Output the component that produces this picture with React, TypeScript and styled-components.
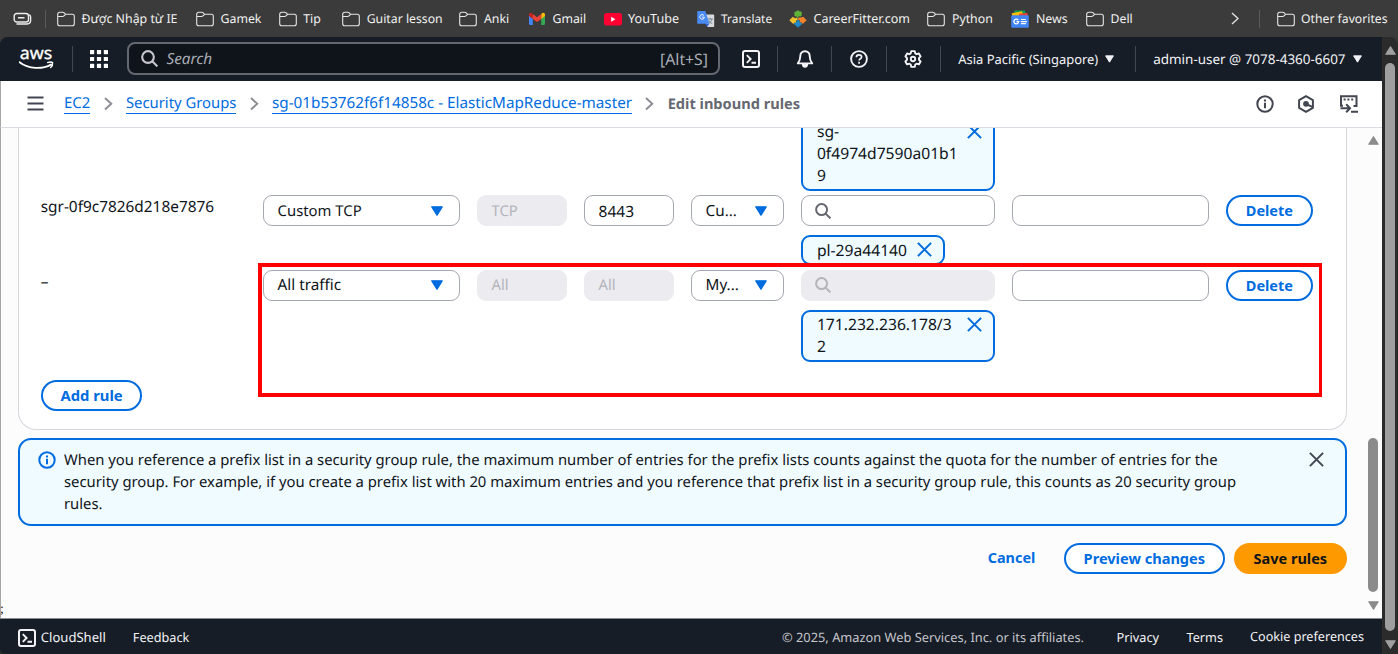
import React from 'react';
import styled, { createGlobalStyle, css } from 'styled-components';

const Global = createGlobalStyle`
  * { box-sizing: border-box; }
  html, body { margin: 0; padding: 0; overflow: hidden; }
  body { font-family: 'Noto Sans', sans-serif; text-rendering: geometricPrecision; color: #0f141a; background: #3b3b3b; }
  svg { display: block; flex: none; }
`;

const blue = '#006ce0';

/* ---------- browser chrome ---------- */
const Browser = styled.div`
  width: 1398px;
  height: 654px;
  display: grid;
  grid-template-rows: 37px 1fr;
  background: #3b3b3b;
`;
const BookmarkBar = styled.nav`
  display: flex;
  align-items: center;
  color: #f2f2f2;
  padding-left: 13px;
`;
const Bookmark = styled.div<{ $w?: number; $size?: number }>`
  display: flex;
  align-items: center;
  gap: 6.5px;
  width: ${p => (p.$w ? `${p.$w}px` : 'auto')};
  flex: none;
  font-size: ${p => p.$size ?? 12.3}px;
  line-height: 18px;
  white-space: nowrap;
`;
const BarLine = styled.span`
  width: 1px;
  height: 18px;
  background: #5a5a5a;
  flex: none;
`;
const BarStart = styled.div`
  display: flex;
  align-items: center;
  justify-content: space-between;
  width: 33px;
  margin-right: 11px;
`;
const BarEnd = styled.div`
  display: flex;
  align-items: center;
  margin-left: auto;
  gap: 17px;
  padding-right: 10.5px;
  svg:first-child { margin-right: 2px; }
  div svg:first-child { margin-right: 0; }
`;
const Window = styled.div`
  display: flex;
  min-height: 0;
  background: #2b2b2b;
  border-radius: 8px 8px 0 0;
  overflow: hidden;
`;
const Console = styled.div`
  position: relative;
  width: 1382px;
  display: flex;
  flex-direction: column;
  min-height: 0;
  border-bottom-left-radius: 6px;
`;
const ScrollTrack = styled.div<{ $w: number }>`
  width: ${p => p.$w}px;
  flex: none;
  display: flex;
  flex-direction: column;
  align-items: center;
`;
const Thumb = styled.div<{ $h: number; $color: string }>`
  width: 9.5px;
  height: ${p => p.$h}px;
  border-radius: 5px;
  background: ${p => p.$color};
`;
const OuterTrack = styled(ScrollTrack)`
  justify-content: space-between;
  padding: 8.5px 0 5px;
`;
const InnerTrack = styled(ScrollTrack)`
  margin-left: auto;
  padding: 8.5px 0 8px;
`;
const TrackSpace = styled.div<{ $h: number }>`
  height: ${p => p.$h}px;
`;

/* ---------- console header ---------- */
const Header = styled.header`
  height: 44px;
  flex: none;
  display: flex;
  align-items: center;
  background: #161d26;
  color: #f3f3f7;
  padding-bottom: 1px;
`;
const Divider = styled.span`
  width: 1px;
  height: 26px;
  background: #424650;
  flex: none;
`;
const LogoCell = styled.div`
  width: 72px;
  padding-left: 19px;
`;
const GridCell = styled.div`
  width: 54px;
  padding-left: 17px;
`;
const SearchBox = styled.div`
  width: 593px;
  height: 33px;
  border: 2px solid #656871;
  border-radius: 8px;
  background: #0f141a;
  display: flex;
  align-items: center;
  padding: 0 10px 0 11.5px;
  margin-right: 4px;
  color: #a9adb6;
`;
const SearchHint = styled.span`
  font-size: 15.3px;
  font-style: italic;
  margin-left: 9px;
  line-height: 20px;
`;
const Shortcut = styled.span`
  margin-left: auto;
  font-size: 15.8px;
  line-height: 20px;
`;
const IconCell = styled.div`
  width: 53.2px;
  display: flex;
  justify-content: center;
`;
const NavMenu = styled.div<{ $size: number; $w?: number }>`
  display: flex;
  align-items: center;
  gap: 7px;
  padding-left: 17.5px;
  width: ${p => (p.$w ? `${p.$w}px` : 'auto')};
  font-size: ${p => p.$size}px;
  white-space: nowrap;
`;

/* ---------- breadcrumbs ---------- */
const CrumbBar = styled.div`
  height: 46.5px;
  flex: none;
  display: flex;
  align-items: center;
  background: #fff;
  border-left: 1px solid #a6a6a6;
  border-bottom: 1px solid #d9dbe0;
  padding: 0 24.5px 0 25.5px;
`;
const Crumbs = styled.div`
  display: flex;
  align-items: center;
  gap: 13.4px;
  margin-left: 20.5px;
`;
const Crumb = styled.a<{ $size: number }>`
  color: ${blue};
  font-size: ${p => p.$size}px;
  line-height: 19px;
  border-bottom: 1px solid ${blue};
  white-space: nowrap;
`;
const CurrentCrumb = styled.span`
  color: #656871;
  font-weight: 700;
  font-size: 14.6px;
  line-height: 20px;
`;
const CrumbTools = styled.div`
  display: flex;
  gap: 23.5px;
  margin-left: auto;
`;

/* ---------- main ---------- */
const Main = styled.main`
  flex: 1;
  min-height: 0;
  display: flex;
  overflow: hidden;
  background: #fcfcfd;
  border-left: 1px solid #a6a6a6;
`;
const Content = styled.div`
  width: 1329px;
  margin-left: 17px;
`;
const Card = styled.section`
  height: 302px;
  background: #fff;
  border: 1px solid #d5d7dc;
  border-top: 0;
  border-radius: 0 0 18px 18px;
  padding-left: 21.7px;
  overflow: hidden;
`;
const RuleRow = styled.div<{ $h: number; $pull?: number }>`
  display: grid;
  grid-template-columns: 205.3px 196.7px 89.7px 89.7px 92.6px 193.5px 197px 86px;
  column-gap: 17.3px;
  align-items: start;
  height: ${p => p.$h}px;
  margin-top: ${p => -(p.$pull ?? 0)}px;
  font-size: 15.4px;
  line-height: 22px;
`;
const RuleId = styled.div`
  white-space: nowrap;
  padding-top: .8px;
`;
const fieldFrame = css`
  height: 31px;
  border: 1px solid #a4a8b1;
  border-radius: 9px;
  display: flex;
  align-items: center;
  padding: 0 14px 0 13.3px;
  background: #fff;
  white-space: nowrap;
`;
const Field = styled.div<{ $disabled?: boolean; $size?: number }>`
  ${fieldFrame}
  font-size: ${p => p.$size ?? 15.3}px;
  ${p => p.$disabled && css`
    background: #ebebf0;
    border-color: #ebebf0;
    color: #b4b4bb;
  `}
`;
const SelectField = styled(Field)`
  justify-content: space-between;
  padding-right: 16px;
`;
const SourceCell = styled.div`
  display: flex;
  flex-direction: column;
  align-items: stretch;
  gap: 9px;
`;
const Token = styled.div<{ $narrow?: boolean }>`
  display: flex;
  justify-content: space-between;
  width: ${p => (p.$narrow ? '143.5px' : 'auto')};
  border: 2px solid ${blue};
  border-radius: 9px;
  background: #f0fbff;
  padding: 1.5px 10.5px 2.7px 13.8px;
  font-size: 15.65px;
  line-height: 22px;
  svg { margin-top: 3.8px; }
`;
const TokenText = styled.span`
  white-space: pre-line;
`;
const PillButton = styled.button<{ $w: number; $kind?: 'primary' | 'link'; $size?: number }>`
  width: ${p => p.$w}px;
  height: 31px;
  padding: 0 0 1px;
  border-radius: 16px;
  border: 2px solid ${p => (p.$kind === 'primary' ? '#ff9900' : p.$kind === 'link' ? 'transparent' : blue)};
  background: ${p => (p.$kind === 'primary' ? '#ff9900' : p.$kind === 'link' ? 'transparent' : '#fff')};
  color: ${p => (p.$kind === 'primary' ? '#0f141a' : blue)};
  font: 700 ${p => p.$size ?? 14.5}px/20px 'Noto Sans', sans-serif;
  white-space: nowrap;
`;
const Notice = styled.aside`
  margin-top: 8.5px;
  height: 88px;
  border: 2px solid ${blue};
  border-radius: 13px;
  background: #f0fbff;
  display: flex;
  padding: 8.7px 21.5px 0 17.5px;
`;
const NoticeIcon = styled.div`
  padding-top: 2.3px;
  margin-right: 8.5px;
`;
const NoticeText = styled.p`
  margin: 0;
  font-size: 14.82px;
  line-height: 22px;
  white-space: pre-line;
`;
const NoticeClose = styled.div`
  margin-left: auto;
  padding-top: 3.3px;
`;
const Actions = styled.div`
  display: flex;
  justify-content: flex-end;
  margin-top: 17px;
  gap: 9px;
`;
const Highlight = styled.div`
  position: absolute;
  left: 258px;
  top: 226px;
  width: 1064px;
  height: 134px;
  border: solid #fe0000;
  border-width: 4px 3px 4px 4px;
`;
const Stray = styled.span`
  position: absolute;
  left: 0;
  top: 564px;
  font: 14px/18px 'Liberation Serif', serif;
`;

/* ---------- footer ---------- */
const Footer = styled.footer`
  height: 36px;
  flex: none;
  display: flex;
  align-items: center;
  background: #161d26;
  color: #f3f3f7;
  padding: 2.500px 18px 0 17.5px;
  border-top: 1px solid #8c8c94;
  border-bottom-left-radius: 6px;
  white-space: nowrap;
  line-height: 18px;
`;
const FooterItem = styled.span<{ $size: number; $gap: number; $muted?: boolean }>`
  font-size: ${p => p.$size}px;
  margin-left: ${p => p.$gap}px;
  padding-bottom: 1px;
  color: ${p => (p.$muted ? '#c6c6cd' : 'inherit')};
`;
const FooterRight = styled.div`
  margin-left: auto;
  display: flex;
`;

/* ---------- drawings ---------- */
const FolderIcon = () => (
  <svg width="18" height="18" viewBox="0 0 18 18" fill="none" stroke="#e6e6e6" strokeWidth="1.1">
    <path d="M.7 4.2a2 2 0 0 1 2-2h3.1c.6 0 1 .2 1.4.6L8.6 4.300h6.700a2 2 0 0 1 2 2v7.400a2 2 0 0 1-2 2H2.700a2 2 0 0 1-2-2zM.7 6.500h4.900c.6 0 1-.2 1.400-.6l1.600-1.600" />
  </svg>
);
const GmailIcon = () => (
  <svg width="18" height="18" viewBox="0 0 18 18">
    <path d="M1 4.500v9.300c0 .7.500 1.200 1.200 1.200h2.600V8.200z" fill="#4285f4" />
    <path d="M17 4.500v9.300c0 .7-.5 1.200-1.200 1.200h-2.600V8.200z" fill="#34a853" />
    <path d="M13.200 4.300v4.600L17 6V4.600c0-1.700-1.800-2.400-3-1.400z" fill="#fbbc04" />
    <path d="M1 4.600V6l3.800 2.900V4.300L4 3.200C2.800 2.200 1 2.900 1 4.600z" fill="#c5221f" />
    <path d="M4.800 4v4.900L9 12l4.200-3.100V4L9 7.200z" fill="#ea4335" />
  </svg>
);
const YouTubeIcon = () => (
  <svg width="18" height="18" viewBox="0 0 18 18">
    <rect x="0" y="3" width="18" height="12.500" rx="2.800" fill="#ff0033" />
    <path d="M7.200 6.800v5l4.200-2.500z" fill="#fff" />
  </svg>
);
const TranslateIcon = () => (
  <svg width="18" height="18" viewBox="0 0 18 18">
    <path d="M7 4.500h9.200c.6 0 1 .4 1 1v10.500c0 .6-.4 1-1 1h-5.700z" fill="#d8dadd" />
    <path d="M10.500 9h5.500M13.200 7.800V9M15 9c-.4 2-1.800 3.600-3.700 4.600M11.700 10.300c.7 1.400 1.800 2.500 3.500 3.300" fill="none" stroke="#6b7f8c" strokeWidth=".9" />
    <path d="M8.200 13.800h4.200l-2.200 3z" fill="#3367d6" />
    <path d="M1.200.9h7.200l4 12.900H1.200c-.6 0-1-.4-1-1V1.900c0-.6.4-1 1-1z" fill="#4a8af4" />
    <path d="M7 5.600A2.300 2.300 0 1 0 7.400 7.200H5.200" fill="none" stroke="#fff" strokeWidth="1" />
  </svg>
);
const PuzzleIcon = () => (
  <svg width="18" height="18" viewBox="0 0 18 18">
    <path d="M9 17.800 4.500 13.500l2.700-1.300L9 9l2 3.200 2.500 1.300z" fill="#1e88c8" />
    <path d="M.3 10.200 3.800 6.700l2.200 1.500 2-.8.9 2.100-2 1.200.3 2-1.700-.3-1.200 1.700z" fill="#f2c12e" />
    <path d="M17.700 10.200 14.200 6.700l-2.400.9-2.100-.1-.8 2 2 .9-.2 2 1.800-.2 1.200 1.700z" fill="#f0822c" />
    <path d="M5.600 4C4.600 2.500 6 1 7.400 1.600 8-.2 10.400.200 10.800 1.700c1.700-.5 2.800 1.200 1.700 2.600.8 1-.2 2.400-1.400 2.200l-1.500-.2L9 9 8 6.400C6.300 7.200 4.800 5.600 5.600 4z" fill="#5fb336" />
  </svg>
);
const NewsIcon = () => (
  <svg width="18" height="18" viewBox="0 0 18 18">
    <path d="M3.500.6h10.400l1 4H3z" fill="#0c9d58" />
    <path d="M.8 3.200 11 1.200l1.500 5H1.200z" fill="#fbbc04" />
    <path d="M8 3.800l8.500-.8.300 4H8z" fill="#ea4335" />
    <rect x=".2" y="5.200" width="17.600" height="12.600" rx="1" fill="#4285f4" />
    <path d="M7.200 10A2.400 2.400 0 1 0 7.700 11.700H5.400" fill="none" stroke="#fff" strokeWidth="1.300" />
    <path d="M9.900 9.500h5M9.900 11.600h6M9.900 13.700h5" stroke="#fff" strokeWidth="1.200" />
  </svg>
);
const StackIcon = () => (
  <svg width="19" height="14" viewBox="0 0 19 14" fill="none" stroke="#ededed" strokeWidth="1.400">
    <rect x="1.200" y="1.500" width="14.300" height="8.500" rx="2.600" />
    <path d="M5 5.800h6.500M3.500 12h10.700a3.400 3.400 0 0 0 3.400-3.400V5c0-1.100-.5-1.900-1.300-2.300" />
  </svg>
);
const ChevronIcon = ({ size, color, w }: { size: number; color: string; w: number }) => (
  <svg width={size * 0.65} height={size} viewBox="0 0 9 14" fill="none" stroke={color} strokeWidth={w}>
    <path d="m1 1 6.500 6L1 13" />
  </svg>
);
const AwsLogo = () => (
  <svg width="38" height="24" viewBox="0 0 38 24">
    <text x="0.800" y="12" fontSize="17" fontFamily="Noto Sans, sans-serif" fill="#fff" stroke="#fff" strokeWidth=".3" textLength="32.500" lengthAdjust="spacingAndGlyphs">aws</text>
    <path d="M.5 15.200C9.500 22.300 23.500 22.400 32 17.600" fill="none" stroke="#fff" strokeWidth="1.900" strokeLinecap="round" />
    <path d="M28.600 15.600c1.800-.7 4-.8 5 0 .2 1.700-.5 3.700-1.900 5" fill="none" stroke="#fff" strokeWidth="1.400" strokeLinecap="round" />
  </svg>
);
const AppsIcon = () => (
  <svg width="18" height="18" viewBox="0 0 18 18" fill="#fff">
    {[0, 6.9, 13.8].map(y => [0, 6.9, 13.8].map(x => <rect key={`${x}-${y}`} x={x} y={y} width="4.200" height="4.200" rx=".6" />))}
  </svg>
);
const SearchIcon = ({ size = 16, color }: { size?: number; color: string }) => (
  <svg width={size} height={size} viewBox="0 0 16 16" fill="none" stroke={color} strokeWidth="2">
    <circle cx="6.600" cy="6.600" r="5.500" />
    <path d="m10.600 10.600 4.800 4.800" />
  </svg>
);
const ShellIcon = () => (
  <svg width="18" height="18" viewBox="0 0 18 18" fill="none" stroke="#f3f3f7" strokeWidth="2">
    <rect x="1" y="1" width="16" height="16" rx="2" />
    <path d="m4.800 5.200 3.800 3.800-3.800 3.800M9.500 12.800h4.500" strokeWidth="1.900" />
  </svg>
);
const BellIcon = () => (
  <svg width="18" height="18" viewBox="0 0 18 18" fill="none" stroke="#f3f3f7" strokeWidth="1.900">
    <path d="M9 1.200C5.900 1.200 4.300 3.400 4.300 6.200c0 3.800-.9 5.200-2.500 7.200h14.400c-1.600-2-2.500-3.400-2.500-7.200 0-2.800-1.600-5-4.700-5z" strokeLinejoin="round" />
    <path d="M5.900 14a3.100 3.800 0 0 0 6.200 0z" fill="#f3f3f7" stroke="none" />
  </svg>
);
const HelpIcon = () => (
  <svg width="18" height="18" viewBox="0 0 18 18" fill="none" stroke="#f3f3f7" strokeWidth="1.900">
    <circle cx="9" cy="9" r="7.900" />
    <path d="M6.400 7.200C6.400 5.600 7.500 4.800 9 4.800s2.600.9 2.600 2.300c0 1.700-2.500 1.700-2.500 3.500M9.100 11.700v2" strokeWidth="1.700" />
  </svg>
);
const GearIcon = () => (
  <svg width="18" height="18" viewBox="0 0 18 18" fill="none" stroke="#f3f3f7" strokeWidth="1.900" strokeLinejoin="round">
    <path d="M7.300 1.100h3.400l.6 2.300 1.300.8 2.300-.7 1.700 2.900L15 8.200v1.600l1.600 1.700-1.700 2.900-2.300-.7-1.300.8-.6 2.400H7.300l-.6-2.400-1.300-.8-2.300.7-1.700-2.900L3 9.800V8.200L1.400 6.400l1.700-2.900 2.300.7 1.300-.8z" />
    <circle cx="9" cy="9" r="2.200" />
  </svg>
);
const Caret = ({ w, h, color, up }: { w: number; h: number; color: string; up?: boolean }) => (
  <svg width={w} height={h} viewBox="0 0 12 10">
    <path d={up ? 'M6 .8 11.200 9.200H.8z' : 'M.8.8h10.400L6 9.200z'} fill={color} stroke={color} strokeWidth="1.300" strokeLinejoin="round" />
  </svg>
);
const MenuIcon = () => (
  <svg width="17" height="15" viewBox="0 0 17 15" stroke="#424650" strokeWidth="2">
    <path d="M.5 1.500h16M.5 7.500h16M.5 13.500h16" />
  </svg>
);
const InfoIcon = ({ color }: { color: string }) => (
  <svg width="18" height="18" viewBox="0 0 18 18" fill="none" stroke={color} strokeWidth="2">
    <circle cx="9" cy="9" r="7.700" />
    <path d="M9 7.700v5.500M9 4.600v2" />
  </svg>
);
const HexIcon = () => (
  <svg width="18" height="18" viewBox="0 0 18 18" fill="none" stroke="#424650" strokeWidth="2" strokeLinejoin="round">
    <path d="m9 1.200 6.900 3.900v7.800L9 16.800l-6.900-3.900V5.100z" />
    <circle cx="9" cy="8.800" r="2.900" fill="#424650" stroke="none" />
    <path d="m9 9 6.200 2.800" />
  </svg>
);
const TourIcon = () => (
  <svg width="19" height="18" viewBox="0 0 19 18" fill="none" stroke="#424650" strokeWidth="2">
    <path d="M4 10.800H2V1.200h15.500V11h-3M1.500 13.300h8.500M7.200 9.300l3.800 3.900-3.800 4M12 16.800h7" />
    <path d="M4.600 4.500h2M8.400 4.500h2M12.200 4.500h2" />
  </svg>
);
const CloseIcon = ({ color }: { color: string }) => (
  <svg width="15" height="15" viewBox="0 0 15 15" stroke={color} strokeWidth="2">
    <path d="m.9.9 13.200 13.200M14.100.9.900 14.100" />
  </svg>
);

const bookmarks = [
  { label: 'Được Nhập từ IE', w: 139, size: 12.36, icon: <FolderIcon /> },
  { label: 'Gamek', w: 82.7, size: 12.34, icon: <FolderIcon /> },
  { label: 'Tip', w: 63.5, size: 12.3, icon: <FolderIcon /> },
  { label: 'Guitar lesson', w: 117.3, size: 12.25, icon: <FolderIcon /> },
  { label: 'Anki', w: 68.5, size: 12.3, icon: <FolderIcon /> },
  { label: 'Gmail', w: 75.6, size: 12.3, icon: <GmailIcon /> },
  { label: 'YouTube', w: 93, size: 12.62, icon: <YouTubeIcon /> },
  { label: 'Translate', w: 92.5, size: 11.86, icon: <TranslateIcon /> },
  { label: 'CareerFitter.com', w: 138.4, size: 12.48, icon: <PuzzleIcon /> },
  { label: 'Python', w: 84, size: 12.3, icon: <FolderIcon /> },
  { label: 'News', w: 74.5, size: 12.3, icon: <NewsIcon /> },
  { label: 'Dell', w: 60, size: 12.3, icon: <FolderIcon /> },
];

interface Rule {
  id: string;
  h: number;
  type: string;
  typeSize: number;
  protocol: string;
  port: string;
  fixedPort?: boolean;
  source: string;
  fixedSource?: boolean;
  token: string;
  narrow?: boolean;
}
const rules: Rule[] = [
  { id: 'sgr-0f9c7826d218e7876', h: 74.8, type: 'Custom TCP', typeSize: 14.85, protocol: 'TCP', port: '8443', source: 'Cu...', token: 'pl-29a44140', narrow: true },
  { id: '–', h: 110.2, type: 'All traffic', typeSize: 15.28, protocol: 'All', port: 'All', fixedPort: true, source: 'My...', fixedSource: true, token: '171.232.236.178/3\n2' },
];

const RuleLine = ({ rule }: { rule: Rule }) => (
  <RuleRow $h={rule.h}>
    <RuleId>{rule.id}</RuleId>
    <SelectField $size={rule.typeSize}>{rule.type}<Caret w={12} h={10} color={blue} /></SelectField>
    <Field $disabled $size={14.8}>{rule.protocol}</Field>
    <Field $disabled={rule.fixedPort} $size={rule.fixedPort ? 14.8 : 15.5}>{rule.port}</Field>
    <SelectField>{rule.source}<Caret w={12} h={10} color={blue} /></SelectField>
    <SourceCell>
      <Field $disabled={rule.fixedSource}><SearchIcon color={rule.fixedSource ? '#b4b4bb' : '#656871'} /></Field>
      <Token $narrow={rule.narrow}><TokenText>{rule.token}</TokenText><CloseIcon color={blue} /></Token>
    </SourceCell>
    <Field />
    <PillButton $w={86.3}>Delete</PillButton>
  </RuleRow>
);

export default function App() {
  return (
    <Browser>
      <Global />
      <BookmarkBar>
        <BarStart><StackIcon /><BarLine /></BarStart>
        {bookmarks.map(b => (
          <Bookmark key={b.label} $w={b.w} $size={b.size}>{b.icon}<span>{b.label}</span></Bookmark>
        ))}
        <BarEnd>
          <ChevronIcon size={13} color="#e6e6e6" w={1.4} />
          <BarLine />
          <Bookmark $size={12.2}><FolderIcon /><span>Other favorites</span></Bookmark>
        </BarEnd>
      </BookmarkBar>
      <Window>
        <Console>
          <Header>
            <LogoCell><AwsLogo /></LogoCell>
            <Divider />
            <GridCell><AppsIcon /></GridCell>
            <SearchBox>
              <SearchIcon color="#c6c6cd" size={17} />
              <SearchHint>Search</SearchHint>
              <Shortcut>[Alt+S]</Shortcut>
            </SearchBox>
            <IconCell><ShellIcon /></IconCell>
            <Divider />
            <IconCell><BellIcon /></IconCell>
            <Divider />
            <IconCell><HelpIcon /></IconCell>
            <Divider />
            <IconCell><GearIcon /></IconCell>
            <Divider />
            <NavMenu $size={12.95} $w={194}>Asia Pacific (Singapore)<Caret w={9} h={8} color="#f3f3f7" /></NavMenu>
            <Divider />
            <NavMenu $size={13.45}>admin-user @ 7078-4360-6607<Caret w={9} h={8} color="#f3f3f7" /></NavMenu>
          </Header>
          <CrumbBar>
            <MenuIcon />
            <Crumbs>
              <Crumb $size={15}>EC2</Crumb>
              <ChevronIcon size={13.5} color="#8c8c94" w={2} />
              <Crumb $size={14.83}>Security Groups</Crumb>
              <ChevronIcon size={13.5} color="#8c8c94" w={2} />
              <Crumb $size={15.25}>sg-01b53762f6f14858c - ElasticMapReduce-master</Crumb>
              <ChevronIcon size={13.5} color="#8c8c94" w={2} />
              <CurrentCrumb>Edit inbound rules</CurrentCrumb>
            </Crumbs>
            <CrumbTools>
              <InfoIcon color="#424650" />
              <HexIcon />
              <TourIcon />
            </CrumbTools>
          </CrumbBar>
          <Main>
            <Content>
              <Card>
                <RuleRow $h={78.7} $pull={11}>
                  <span /><span /><span /><span /><span />
                  <Token><TokenText>{'sg-\n0f4974d7590a01b1\n9'}</TokenText><CloseIcon color={blue} /></Token>
                </RuleRow>
                {rules.map(r => <RuleLine key={r.id} rule={r} />)}
                <PillButton $w={101.7} $size={14.8}>Add rule</PillButton>
              </Card>
              <Notice>
                <NoticeIcon><InfoIcon color={blue} /></NoticeIcon>
                <NoticeText>
                  {'When you reference a prefix list in a security group rule, the maximum number of entries for the prefix lists counts against the quota for the number of entries for the\nsecurity group. For example, if you create a prefix list with 20 maximum entries and you reference that prefix list in a security group rule, this counts as 20 security group\nrules.'}
                </NoticeText>
                <NoticeClose><CloseIcon color="#424650" /></NoticeClose>
              </Notice>
              <Actions>
                <PillButton $w={87} $kind="link" $size={14.4}>Cancel</PillButton>
                <PillButton $w={160.7} $size={14.58}>Preview changes</PillButton>
                <PillButton $w={113.3} $kind="primary">Save rules</PillButton>
              </Actions>
            </Content>
            <InnerTrack $w={18}>
              <Caret up w={11} h={9} color="#8b8b8b" />
              <TrackSpace $h={293.5} />
              <Thumb $h={154} $color="#8b8b8b" />
              <TrackSpace $h={9} />
              <Caret w={11} h={9} color="#8b8b8b" />
            </InnerTrack>
          </Main>
          <Footer>
            <ShellIcon />
            <FooterItem $size={13.07} $gap={5.3}>CloudShell</FooterItem>
            <FooterItem $size={12.69} $gap={27}>Feedback</FooterItem>
            <FooterRight>
              <FooterItem $size={12.83} $gap={0} $muted>© 2025, Amazon Web Services, Inc. or its affiliates.</FooterItem>
              <FooterItem $size={12.74} $gap={32.5}>Privacy</FooterItem>
              <FooterItem $size={12.69} $gap={27.5}>Terms</FooterItem>
              <FooterItem $size={12.62} $gap={27}>Cookie preferences</FooterItem>
            </FooterRight>
          </Footer>
          <Highlight />
          <Stray>;</Stray>
        </Console>
        <OuterTrack $w={16}>
          <Caret up w={11} h={9} color="#a0a0a0" />
          <Thumb $h={568} $color="#9f9f9f" />
          <Caret w={11} h={9} color="#a0a0a0" />
        </OuterTrack>
      </Window>
    </Browser>
  );
}
